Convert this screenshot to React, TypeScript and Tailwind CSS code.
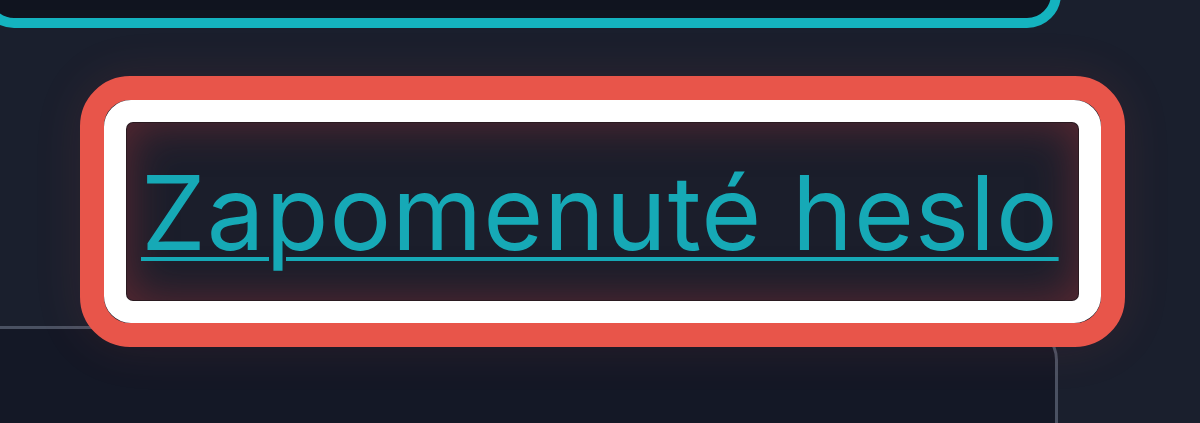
import React from "react";

export default function App() {
  return (
    <div className="w-[1200px] h-[423px] overflow-hidden bg-[#1a1f2d] flex flex-col" style={{ fontFamily: "Inter, 'Noto Sans', sans-serif" }}>
      <div className="mt-[-40px] ml-[-20px] h-[68px] w-[1081px] shrink-0 rounded-[40px] border-[10px] border-[#14b3bf] bg-[#10141f]" />
      <div className="relative z-10 ml-[80px] mt-[48px] w-[1045px] shrink-0 rounded-[50px] border-[24px] border-[#e8554a] shadow-[0_0_50px_rgba(232,85,74,0.1)]">
        <div className="rounded-[27px] border-[23px] border-white bg-white">
          <div className="h-[177px] rounded-[6px] bg-[#1b1e2b] shadow-[inset_0_0_45px_rgba(150,50,55,0.55),0_0_0_1px_#2a1a20] flex items-center">
            <a
              href="#"
              className="ml-[14px] mt-[1px] text-[103px] leading-none text-[#16a9b6] underline decoration-[4px] underline-offset-[7px] tracking-[0.9px] whitespace-nowrap"
            >
              Zapomenuté heslo
            </a>
          </div>
        </div>
      </div>
      <div className="mt-[-21px] ml-[-20px] w-[1078px] h-[200px] shrink-0 rounded-tr-[34px] border-[3px] border-[#4a5162] bg-[#141826]" />
    </div>
  );
}
